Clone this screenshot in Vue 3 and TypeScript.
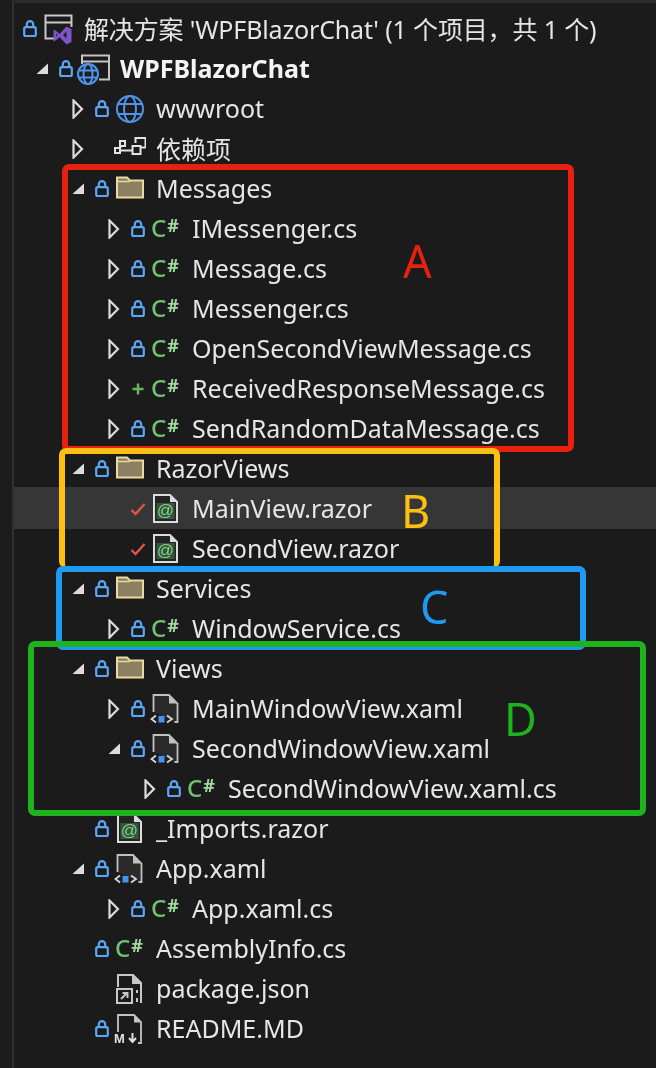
<script setup lang="ts">
type Row = {
  depth: number
  text: string
  arrow?: 'open' | 'closed'
  mark?: 'lock' | 'plus' | 'check'
  icon: string
  bold?: boolean
  selected?: boolean
}
const rows: Row[] = [
  { depth: 0, text: "解决方案 'WPFBlazorChat' (1 个项目，共 1 个)", mark: 'lock', icon: 'solution' },
  { depth: 1, text: 'WPFBlazorChat', arrow: 'open', mark: 'lock', icon: 'project', bold: true },
  { depth: 2, text: 'wwwroot', arrow: 'closed', mark: 'lock', icon: 'globe' },
  { depth: 2, text: '依赖项', arrow: 'closed', icon: 'deps' },
  { depth: 2, text: 'Messages', arrow: 'open', mark: 'lock', icon: 'folder' },
  { depth: 3, text: 'IMessenger.cs', arrow: 'closed', mark: 'lock', icon: 'cs' },
  { depth: 3, text: 'Message.cs', arrow: 'closed', mark: 'lock', icon: 'cs' },
  { depth: 3, text: 'Messenger.cs', arrow: 'closed', mark: 'lock', icon: 'cs' },
  { depth: 3, text: 'OpenSecondViewMessage.cs', arrow: 'closed', mark: 'lock', icon: 'cs' },
  { depth: 3, text: 'ReceivedResponseMessage.cs', arrow: 'closed', mark: 'plus', icon: 'cs' },
  { depth: 3, text: 'SendRandomDataMessage.cs', arrow: 'closed', mark: 'lock', icon: 'cs' },
  { depth: 2, text: 'RazorViews', arrow: 'open', mark: 'lock', icon: 'folder' },
  { depth: 3, text: 'MainView.razor', mark: 'check', icon: 'razor', selected: true },
  { depth: 3, text: 'SecondView.razor', mark: 'check', icon: 'razor' },
  { depth: 2, text: 'Services', arrow: 'open', mark: 'lock', icon: 'folder' },
  { depth: 3, text: 'WindowService.cs', arrow: 'closed', mark: 'lock', icon: 'cs' },
  { depth: 2, text: 'Views', arrow: 'open', mark: 'lock', icon: 'folder' },
  { depth: 3, text: 'MainWindowView.xaml', arrow: 'closed', mark: 'lock', icon: 'xaml' },
  { depth: 3, text: 'SecondWindowView.xaml', arrow: 'open', mark: 'lock', icon: 'xaml' },
  { depth: 4, text: 'SecondWindowView.xaml.cs', arrow: 'closed', mark: 'lock', icon: 'cs' },
  { depth: 2, text: '_Imports.razor', mark: 'lock', icon: 'razor' },
  { depth: 2, text: 'App.xaml', arrow: 'open', mark: 'lock', icon: 'xaml' },
  { depth: 3, text: 'App.xaml.cs', arrow: 'closed', mark: 'lock', icon: 'cs' },
  { depth: 2, text: 'AssemblyInfo.cs', mark: 'lock', icon: 'cs' },
  { depth: 2, text: 'package.json', icon: 'package' },
  { depth: 2, text: 'README.MD', mark: 'lock', icon: 'readme' },
]
const indent = (r: Row) => (r.depth ? 36 * r.depth - 14 : 6) + 'px'
</script>

<template>
  <div class="screen">
    <div class="tree">
      <div
        v-for="r in rows"
        :key="r.text"
        class="row"
        :class="{ selected: r.selected, bold: r.bold, head: r.depth === 0 }"
        :style="{ paddingLeft: indent(r) }"
      >
        <span v-if="r.depth" class="arrow">
          <svg v-if="r.arrow === 'open'" width="20" height="20" viewBox="0 0 20 20">
            <path d="M12 4.500V15H.5Z" fill="#dcdcdc" />
          </svg>
          <svg v-else-if="r.arrow === 'closed'" width="20" height="20" viewBox="0 0 20 20">
            <path d="M1.500 1.500 10 10 1.500 18.500Z" fill="none" stroke="#dcdcdc" stroke-width="2.200" />
          </svg>
        </span>

        <span class="mark">
          <svg v-if="r.mark === 'lock'" width="14" height="18" viewBox="0 0 14 18" fill="none" stroke="#5aa7f5" stroke-width="2.200">
            <rect x="1.200" y="7.200" width="11.600" height="8.800" rx="1.500" />
            <path d="M3.800 7.200V4.300a3.200 3.200 0 0 1 6.400 0v2.900" />
          </svg>
          <svg v-else-if="r.mark === 'plus'" width="14" height="14" viewBox="0 0 14 14">
            <path d="M7 1.500v11M1.500 7h11" stroke="#66b866" stroke-width="2.400" />
          </svg>
          <svg v-else-if="r.mark === 'check'" width="16" height="14" viewBox="0 0 16 14" fill="none">
            <path d="M1.500 8 5.500 12 14.500 2" stroke="#e2514c" stroke-width="2.400" />
          </svg>
        </span>

        <span class="icon">
          <svg v-if="r.icon === 'solution'" width="34" height="34" viewBox="0 0 34 34" fill="none">
            <path d="M14 26.500H5.500V3.500h26V15" stroke="#c9c9c9" stroke-width="2" />
            <path d="M5 10.500h27" stroke="#c9c9c9" stroke-width="2" />
            <path d="M13.500 17.500l3.500 2 2.500 2.500 7-7.500 5 2.500v13l-5 2.500-7-7.500-2.500 2.500-3.500 2Z" fill="#7d55c8" />
            <path d="M26.500 19.500v7L23 23Z" fill="#1e1e1e" />
            <path d="M16 21.500v3l1.600-1.500Z" fill="#1e1e1e" />
          </svg>
          <svg v-else-if="r.icon === 'project'" width="34" height="34" viewBox="0 0 34 34" fill="none">
            <path d="M6 12V3.500h27v24H23" stroke="#c4c4c4" stroke-width="2" />
            <path d="M6 9.500h27" stroke="#c4c4c4" stroke-width="2" />
            <circle cx="12" cy="22" r="10" fill="#1e1e1e" stroke="#4f94ea" stroke-width="2" />
            <ellipse cx="12" cy="22" rx="4.500" ry="10" stroke="#4f94ea" stroke-width="2" />
            <path d="M3 18.500h18M3 25.500h18" stroke="#4f94ea" stroke-width="2" />
          </svg>
          <svg v-else-if="r.icon === 'globe'" width="34" height="34" viewBox="0 0 34 34" fill="none" stroke="#4f94ea" stroke-width="2">
            <circle cx="18" cy="17" r="13" />
            <ellipse cx="18" cy="17" rx="6" ry="13" />
            <path d="M6 12h24M6 22h24" />
          </svg>
          <svg v-else-if="r.icon === 'deps'" width="34" height="34" viewBox="0 0 34 34" fill="none" stroke="#e4e4e4" stroke-width="2">
            <rect x="3" y="16" width="5" height="5" />
            <rect x="8" y="9" width="5" height="5" />
            <rect x="20.500" y="14" width="8" height="8" />
            <path d="M8 18.500h12.500M10 14l-3 2" />
            <path d="M23.500 11V6h10v9.500h-5" />
          </svg>
          <svg v-else-if="r.icon === 'folder'" width="34" height="34" viewBox="0 0 34 34">
            <path d="M5 5.500h10l3 3h13v17H5Z" fill="#8d8062" stroke="#e9d9a3" stroke-width="2" />
            <path d="M5 9.500h13" stroke="#e9d9a3" stroke-width="1.500" />
          </svg>
          <span v-else-if="r.icon === 'cs'" class="cs"><span class="c">C</span><span class="hash">#</span></span>
          <svg v-else-if="r.icon === 'razor'" width="34" height="34" viewBox="0 0 34 34">
            <path d="M6 3h16l7 7v20H6Z" fill="#242424" stroke="#dcdcdc" stroke-width="2" />
            <path d="M22 3v7h7" fill="#dcdcdc" />
            <rect x="8.500" y="11" width="18" height="16" fill="#34583c" />
            <text x="17.500" y="24" class="at">@</text>
          </svg>
          <svg v-else-if="r.icon === 'xaml'" width="34" height="34" viewBox="0 0 34 34" fill="none">
            <path d="M5.500 20V3h15.500l8.500 8.500V30h-3" fill="#2a2a2a" />
            <path d="M5.500 20V3h15.500l8.500 8.500V30h-3" stroke="#c0c0c0" stroke-width="1.800" />
            <path d="M21 3.500v8h8Z" fill="#c0c0c0" />
            <path d="M8 23.500 3.500 27 8 30.500M19 23.500 24 27 19 30.500" stroke="#d8d8d8" stroke-width="1.800" />
            <rect x="10.500" y="24" width="6" height="6.500" fill="#3f97f2" />
          </svg>
          <svg v-else-if="r.icon === 'package'" width="34" height="34" viewBox="0 0 34 34" fill="none" stroke="#c8c8c8" stroke-width="2">
            <path d="M6 15V3h15l8 8v20" />
            <path d="M21 3v8h8" fill="#c8c8c8" />
            <rect x="5" y="17" width="15" height="14" />
            <path d="M9 27l6-6M10.500 21H15.500V26" />
            <path d="M25 18v3M25 26v4" />
          </svg>
          <svg v-else-if="r.icon === 'readme'" width="34" height="34" viewBox="0 0 34 34" fill="none">
            <path d="M6 20V3h16l7 7v21h-3" stroke="#c4c4c4" stroke-width="1.800" />
            <path d="M22 3.500v7h7Z" fill="#c4c4c4" />
            <text x="2" y="31" class="md">M</text>
            <path d="M20.500 21v8M17 26l3.500 4 3.500-4" stroke="#e0e0e0" stroke-width="2" />
          </svg>
        </span>

        <span class="label">{{ r.text }}</span>
      </div>
    </div>

    <div class="box red"><span class="tag">A</span></div>
    <div class="box orange"><span class="tag">B</span></div>
    <div class="box blue"><span class="tag">C</span></div>
    <div class="box green"><span class="tag">D</span></div>
  </div>
</template>

<style>
html,
body {
  margin: 0;
  background: #1d1d1d;
}
</style>

<style scoped>
.screen {
  position: relative;
  width: 656px;
  height: 1068px;
  overflow: hidden;
  background: #1c1c1c;
  font-family: "Noto Sans", "Noto Sans CJK SC", sans-serif;
  box-sizing: border-box;
}
.tree {
  box-sizing: border-box;
  height: 100%;
  margin-left: 12px;
  background: #1b1b1b;
  border-left: 2px solid #303030;
  border-top: 3px solid #2b2b2b;
  padding-top: 6px;
  filter: blur(0.45px);
}
.row {
  display: flex;
  align-items: center;
  height: 40px;
  box-sizing: border-box;
  color: #e6e6e6;
  font-size: 25px;
  white-space: nowrap;
}
.row.head {
  letter-spacing: -0.15px;
}
.row.selected {
  background: #363637;
  box-shadow: 0 -2px 0 #363637;
}
.row.bold {
  color: #f4f4f4;
  font-weight: 700;
}
.arrow {
  display: flex;
  width: 20px;
  height: 20px;
  flex: none;
}
.mark {
  display: flex;
  align-items: center;
  justify-content: center;
  width: 20px;
  height: 20px;
  flex: none;
}
.icon {
  display: flex;
  align-items: center;
  justify-content: center;
  width: 34px;
  height: 34px;
  flex: none;
}
.label {
  margin-left: 10px;
  margin-bottom: 2px;
}
.cs {
  display: flex;
  align-items: flex-start;
  width: 34px;
  height: 22px;
  padding-left: 3px;
  box-sizing: border-box;
}
.c {
  color: #72c274;
  font-size: 24px;
  font-weight: 500;
  line-height: 20px;
}
.hash {
  margin-left: 1px;
  color: #a2da9d;
  font-size: 18px;
  font-weight: 700;
  line-height: 15px;
}
.at {
  fill: #86cf88;
  font-family: "Liberation Sans", sans-serif;
  font-size: 17px;
  text-anchor: middle;
}
.md {
  fill: #e0e0e0;
  font-family: "Liberation Sans", sans-serif;
  font-size: 13px;
  font-weight: 700;
}
.box {
  position: absolute;
  box-sizing: border-box;
  border: 6px solid;
  border-radius: 7px;
  filter: blur(0.3px);
}
.tag {
  position: absolute;
  font-size: 45px;
  line-height: 46px;
}
.red {
  left: 62px;
  top: 164px;
  width: 512px;
  height: 288px;
  border-color: #e8200f;
  color: #e8200f;
}
.red .tag {
  left: 335px;
  top: 68px;
}
.orange {
  left: 59px;
  top: 448px;
  width: 441px;
  height: 120px;
  border-bottom-width: 0;
  border-color: #fcbf12;
  color: #fcbf12;
}
.orange .tag {
  left: 336px;
  top: 34px;
}
.blue {
  left: 56px;
  top: 566px;
  width: 530px;
  height: 84px;
  border-color: #1e9bf0;
  color: #1e9bf0;
}
.blue .tag {
  left: 358px;
  top: 12px;
}
.green {
  left: 28px;
  top: 641px;
  width: 618px;
  height: 175px;
  border-color: #1eb31e;
  color: #1eb31e;
  z-index: 1;
}
.green .tag {
  left: 470px;
  top: 49px;
}
</style>
